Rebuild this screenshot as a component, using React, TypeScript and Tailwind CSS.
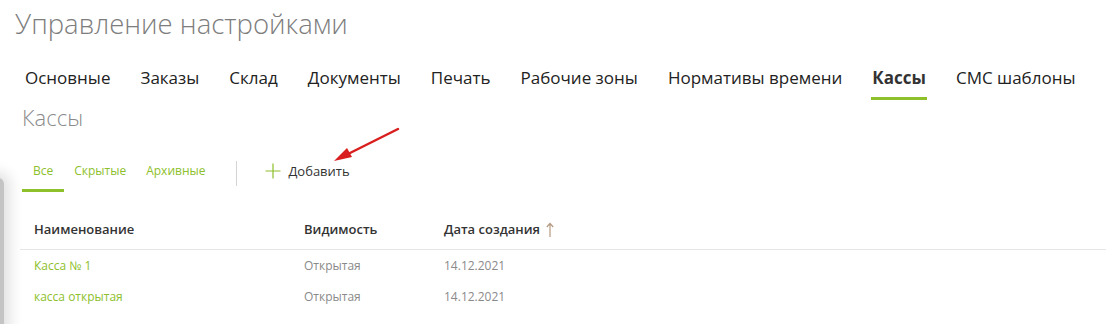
import React from "react";

const tabs = ["Основные", "Заказы", "Склад", "Документы", "Печать", "Рабочие зоны", "Нормативы времени", "Кассы", "СМС шаблоны"];

export default function App() {
  return (
    <div className="relative w-[1106px] h-[324px] overflow-hidden bg-white" style={{ fontFamily: '"Open Sans", "Noto Sans", sans-serif' }}>
      {/* left shadowed panel */}
      <div className="absolute left-[-20px] top-[178px] w-[24px] h-[200px] rounded-tr-[6px] bg-[#c4c4c4] shadow-[0_0_14px_6px_rgba(0,0,0,0.12)]" />

      <div className="pl-[15px] pt-[4px]">
        <h1 className="text-[27.5px] font-light text-[#7d7d7d] leading-[40px]">Управление настройками</h1>
      </div>

      <div className="flex pl-[25px] pt-[23px] gap-[30px] text-[17px] text-[#222] leading-[22px]">
        {tabs.map((t) => (
          <div key={t} className="flex flex-col items-center">
            <span className={t === "Кассы" ? "font-bold text-[#333]" : ""}>{t}</span>
            <div className={t === "Кассы" ? "mt-[8px] h-[3px] w-[calc(100%+2px)] bg-[#8dc02b]" : "mt-[8px] h-[3px]"} />
          </div>
        ))}
      </div>

      <div className="pl-[22px] mt-[3px] text-[22px] font-light text-[#8a8a8a] leading-[28px]">Кассы</div>

      <div className="flex items-center pl-[22px] mt-[30px]">
        <div className="flex text-[12px] text-[#8dc02b]">
          <div className="flex flex-col">
            <span className="px-[11px] leading-[18px]">Все</span>
            <div className="mt-[9px] h-[3px] bg-[#8dc02b]" />
          </div>
          <span className="ml-[10px] leading-[18px] mb-[12px]">Скрытые</span>
          <span className="ml-[20px] leading-[18px] mb-[12px]">Архивные</span>
        </div>
        <div className="ml-[31px] mb-[6px] w-px h-[25px] bg-[#d4d4d4]" />
        <div className="ml-[28px] mb-[12px] flex items-center gap-[7px]">
          <svg width="16" height="16" viewBox="0 0 16 16"><path d="M8 0.5V15.5M0.5 8H15.5" stroke="#8dc02b" strokeWidth="1.2" /></svg>
          <span className="text-[13px] text-[#333] leading-[18px]">Добавить</span>
        </div>
      </div>

      <div className="ml-[20px] mt-[19px] text-[13px]">
        <div className="flex h-[39px] items-center border-b border-[#e6e6e6] font-semibold text-[#333]">
          <span className="pl-[14px] w-[284px]">Наименование</span>
          <span className="w-[140px]">Видимость</span>
          <span className="flex items-center gap-[6px]">Дата создания
            <svg width="8" height="16" viewBox="0 0 8 16"><path d="M4 15V1.5M0.8 5L4 1.5L7.2 5" fill="none" stroke="#b49a80" strokeWidth="1.2" /></svg>
          </span>
        </div>
        {["Касса № 1", "касса открытая"].map((n) => (
          <div key={n} className="flex h-[31px] items-center">
            <span className="pl-[14px] w-[284px] text-[#8dc02b] text-[12px]">{n}</span>
            <span className="w-[140px] text-[#8a8a8a] text-[12px]">Открытая</span>
            <span className="text-[#8a8a8a] text-[12px]">14.12.2021</span>
          </div>
        ))}
      </div>

      {/* red arrow annotation */}
      <svg className="absolute left-[330px] top-[125px]" width="75" height="40" viewBox="0 0 75 40">
        <line x1="68" y1="4" x2="14" y2="31" stroke="#d81e1e" strokeWidth="2.5" strokeLinecap="round" />
        <path d="M4 36 L17 23 L22 32 Z" fill="#d81e1e" />
      </svg>
    </div>
  );
}
